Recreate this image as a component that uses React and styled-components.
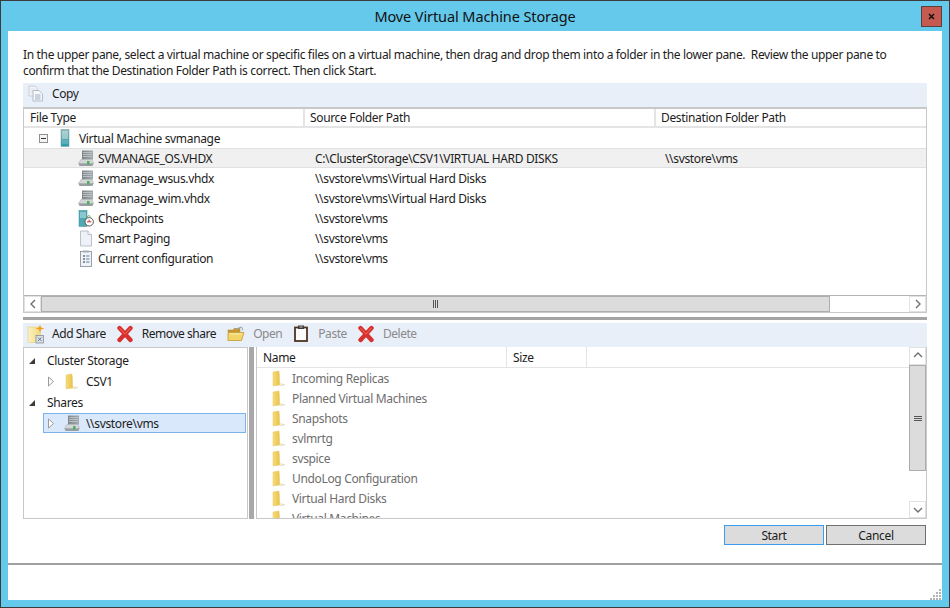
import React from 'react'
import styled, { createGlobalStyle } from 'styled-components'

const Global = createGlobalStyle`
html,body{margin:0;padding:0;background:#fff;}
body{font-family:"Noto Sans","Open Sans",sans-serif;font-size:12px;color:#1c1c1c;letter-spacing:-.34px;}
`
const Frame = styled.div`
position:relative;
width:950px;
height:608px;
box-sizing:border-box;
border:1px solid #3c3c3c;
background:#65c9eb;
display:flex;
flex-direction:column;
padding:0 7px 7px 7px;
overflow:hidden;
`
const TitleBar = styled.div`
height:30px;
flex:none;
display:grid;
grid-template-columns:1fr auto 1fr;
align-items:center;
`
const Title = styled.div`
grid-column:2;
font-size:14.5px;
letter-spacing:-.1px;
color:#111;
`
const CloseBtn = styled.div`
justify-self:end;
width:21px;
height:21px;
box-sizing:border-box;
background:#c55a50;
border:1px solid #5b3f3c;
display:flex;
align-items:center;
justify-content:center;
`
const Body = styled.div`
flex:1;
background:#fff;
display:flex;
flex-direction:column;
min-height:0;
`
const Main = styled.div`
padding:16px 15px 0 15px;
height:532px;
box-sizing:border-box;
display:flex;
flex-direction:column;
flex:none;
`
const Intro = styled.p`
margin:0 0 4px;
line-height:16px;
white-space:pre;
`
const Toolbar = styled.div`
height:24px;
flex:none;
box-sizing:border-box;
padding-bottom:${p => p.$lift}px;
background:#e8eff9;
display:flex;
align-items:center;
`
const Tool = styled.div`
display:flex;
align-items:center;
gap:${p => p.$gap || 8}px;
margin-left:${p => p.$left}px;
color:${p => p.$off ? '#8a8a8a' : '#1c1c1c'};
letter-spacing:-.45px;
white-space:nowrap;
`
const Upper = styled.div`
height:206px;
flex:none;
box-sizing:border-box;
border:1px solid #c8c8c8;
border-top-width:2px;
display:flex;
flex-direction:column;
`
const TableHead = styled.div`
height:17px;
flex:none;
display:flex;
border-bottom:2px solid #e4e4e4;
box-sizing:content-box;
`
const HeadCell = styled.div`
width:${p => p.$w}px;
flex:${p => p.$w ? 'none' : 1};
box-sizing:border-box;
padding-left:${p => p.$pad || 6}px;
line-height:17px;
border-right:${p => p.$line ? '2px solid #e4e4e4' : 'none'};
`
const TableBody = styled.div`
flex:1;
min-height:0;
`
const Row = styled.div`
height:20px;
box-sizing:border-box;
display:flex;
align-items:center;
background:${p => p.$sel ? '#f0f0f0' : 'transparent'};
${p => p.$sel && 'border-top:1px solid #e0e0e0;border-bottom:1px solid #e0e0e0;'}
`
const NameCell = styled.div`
width:291px;
flex:none;
display:flex;
align-items:center;
gap:4px;
padding-left:${p => p.$indent}px;
box-sizing:border-box;
white-space:nowrap;
`
const PathCell = styled.div`
width:${p => p.$w}px;
flex:none;
white-space:nowrap;
`
const VmLabel = styled.span`
margin-left:5px;
`
const ExpandBox = styled.div`
width:9px;
height:9px;
box-sizing:border-box;
border:1px solid #8f8f8f;
background:#f4f4f4;
margin-right:8px;
display:flex;
align-items:center;
justify-content:center;
&::before{content:"";width:5px;height:1px;background:#333;}
`
const HScroll = styled.div`
height:16px;
flex:none;
display:flex;
border-top:1px solid #b4b4b4;
`
const ArrowBtn = styled.div`
width:${p => p.$size || 17}px;
height:${p => p.$h || 16}px;
flex:none;
box-sizing:border-box;
display:flex;
align-items:center;
justify-content:center;
background:#fff;
border:1px solid #e2e2e2;
`
const HThumb = styled.div`
width:789px;
flex:none;
background:#dcdcdc;
box-sizing:border-box;
border:1px solid #adadad;
display:flex;
align-items:center;
justify-content:center;
`
const Grip = styled.div`
display:flex;
flex-direction:${p => p.$v ? 'column' : 'row'};
gap:1px;
& span{
  display:block;
  background:#555;
  width:${p => p.$v ? '8px' : '1px'};
  height:${p => p.$v ? '1px' : '8px'};
}
`
const Track = styled.div`
flex:1;
background:#fff;
`
const Splitter = styled.div`
height:3px;
flex:none;
margin:4px 0 3px;
background:#a4a4a4;
`
const Lower = styled.div`
height:172px;
flex:none;
display:flex;
`
const TreePane = styled.div`
width:225px;
flex:none;
box-sizing:border-box;
border:1px solid #c8c8c8;
padding-top:2px;
`
const TreeRow = styled.div`
height:21px;
display:flex;
align-items:center;
box-sizing:border-box;
margin-left:${p => p.$left || 0}px;
margin-right:${p => p.$left ? 1 : 0}px;
white-space:nowrap;
${p => p.$sel && 'height:20px;background:#d9e8fa;border:1px solid #7db3e8;'}
`
const TreeMark = styled.span`
display:flex;
margin-left:${p => p.$left}px;
margin-right:${p => p.$right}px;
`
const TreeLabel = styled.span`
margin-left:${p => p.$left}px;
`
const VSplit = styled.div`
width:5px;
flex:none;
margin-left:1px;
margin-right:2px;
background:#a8a8a8;
`
const ListPane = styled.div`
flex:1;
min-width:0;
box-sizing:border-box;
border:1px solid #c8c8c8;
border-top:none;
display:flex;
`
const ListMain = styled.div`
flex:1;
min-width:0;
overflow:hidden;
display:flex;
flex-direction:column;
`
const ListHead = styled.div`
height:21px;
flex:none;
display:flex;
box-sizing:border-box;
border-bottom:1px solid #e4e4e4;
`
const ListHeadCell = styled.div`
width:${p => p.$w}px;
flex:none;
box-sizing:border-box;
padding-left:6px;
line-height:22px;
border-right:1px solid #e4e4e4;
`
const ListRow = styled.div`
height:20px;
flex:none;
display:flex;
align-items:center;
gap:6px;
padding-left:15px;
color:#6e6e6e;
white-space:nowrap;
`
const VScroll = styled.div`
width:17px;
flex:none;
display:flex;
flex-direction:column;
`
const VThumb = styled.div`
height:106px;
flex:none;
background:#dcdcdc;
box-sizing:border-box;
border:1px solid #adadad;
display:flex;
align-items:center;
justify-content:center;
`
const Buttons = styled.div`
display:flex;
justify-content:flex-end;
gap:2px;
margin-top:6px;
padding-right:1px;
`
const Btn = styled.div`
width:100px;
height:20px;
box-sizing:border-box;
background:#dcdcdc;
border:1px solid ${p => p.$primary ? '#3c9cf0' : '#707070'};
text-align:center;
line-height:19px;
`
const Footer = styled.div`
flex:1;
border-top:2px solid #a0a0a0;
`
const GripCorner = styled.svg`
position:absolute;
right:7px;
bottom:7px;
`

const Folder = () => (
  <svg width="14" height="17" viewBox="0 0 14 17">
    <defs>
      <linearGradient id="fold" x1="0" y1="0" x2="1" y2="0">
        <stop offset="0" stopColor="#f6dc78" />
        <stop offset="1" stopColor="#e9c24e" />
      </linearGradient>
    </defs>
    <path d="M11 14 L13.5 15 L7 16 Z" fill="#c9c9c9" />
    <path d="M7 3 L8 4 L8 13 L11 13.5 L11 15 L7 15.5 Z" fill="#f7ecc0" />
    <path d="M1 2 L7 1 L7.5 15 L1 16 Z" fill="url(#fold)" stroke="#e6c766" strokeWidth=".5" />
  </svg>
)
const Disk = () => (
  <svg width="16" height="17" viewBox="0 0 16 17">
    <defs>
      <linearGradient id="dsk" x1="0" y1="0" x2="1" y2="0">
        <stop offset="0" stopColor="#7f868a" />
        <stop offset="1" stopColor="#a4aaad" />
      </linearGradient>
    </defs>
    <path d="M4 0.5 H15 V9.5 H4 Z" fill="url(#dsk)" />
    <path d="M5 2.5h9M5 4.5h9M5 6.5h9" stroke="#c7cccf" strokeWidth=".8" />
    <path d="M3 9.5 L14 9.5 L15.5 13.5 L0.5 13.5 Z" fill="#d3d7d9" stroke="#a0a5a7" strokeWidth=".5" />
    <path d="M0.5 13.5 H15.5 L14.5 16 H1.5 Z" fill="#989ea1" />
    <rect x="9" y="11" width="2.5" height="3.5" fill="#4fae5b" />
  </svg>
)
const Server = () => (
  <svg width="10" height="18" viewBox="0 0 10 18">
    <defs>
      <linearGradient id="srv" x1="0" y1="0" x2="0" y2="1">
        <stop offset="0" stopColor="#8db7bc" />
        <stop offset="1" stopColor="#2c9aa6" />
      </linearGradient>
    </defs>
    <rect x="1" y="0.5" width="8" height="17" fill="url(#srv)" stroke="#6d9da3" strokeWidth=".5" />
    <path d="M2 3h6M2 5h6M2 7h6M2 9h6" stroke="#dff1f3" strokeWidth=".9" />
    <path d="M2 12h6M2 14h6" stroke="#6fc4cc" strokeWidth=".9" />
  </svg>
)
const Checkpoint = () => (
  <svg width="16" height="17" viewBox="0 0 16 17">
    <rect x="1" y="0.5" width="8" height="16" fill="#4fa8b2" stroke="#3c8e98" strokeWidth=".5" />
    <path d="M2 3h6M2 5h6M2 7h6" stroke="#d3eef0" strokeWidth=".9" />
    <circle cx="11.2" cy="11.8" r="4.2" fill="#fff" stroke="#4a4a4a" strokeWidth=".9" />
    <path d="M9 11.8h4.4M11.2 9.6v2.2" stroke="#c33" strokeWidth="1" />
    <path d="M8.5 8 L10.5 5.5 L12.5 6.5" stroke="#5a9e4a" strokeWidth=".9" fill="none" />
  </svg>
)
const Page = () => (
  <svg width="16" height="17" viewBox="0 0 16 17">
    <path d="M2.5 1 H10 L13.5 4.5 V16 H2.5 Z" fill="#eef1f8" stroke="#adb3be" strokeWidth=".8" />
    <path d="M10 1 V4.5 H13.5" fill="#fff" stroke="#adb3be" strokeWidth=".8" />
  </svg>
)
const Config = () => (
  <svg width="16" height="17" viewBox="0 0 16 17">
    <rect x="2.5" y="1.5" width="11" height="15" fill="#eff2f6" stroke="#8e96a3" strokeWidth=".9" />
    <rect x="5" y="0.5" width="6" height="2" fill="#a6adb7" />
    <path d="M5 6h2M5 9h2M5 12h2" stroke="#2f2f2f" strokeWidth="1.1" />
    <path d="M8 6h3.5M8 9h3.5M8 12h3.5" stroke="#5c7fb0" strokeWidth="1" />
  </svg>
)
const CopyIcon = () => (
  <svg width="16" height="17" viewBox="0 0 16 17">
    <path d="M1 1 H7 L9 3 V11 H1 Z" fill="#f3f4f7" stroke="#c3c5cb" strokeWidth=".8" />
    <path d="M2.5 4h4M2.5 6h4M2.5 8h4" stroke="#d4d6db" strokeWidth=".7" />
    <path d="M5 5.5 H11 L14.5 9 V16 H5 Z" fill="#f6f8fc" stroke="#a8aeb8" strokeWidth=".8" />
    <path d="M7 10h5.5M7 12h5.5M7 14h5.5" stroke="#8fa7c8" strokeWidth=".9" />
  </svg>
)
const AddShareIcon = () => (
  <svg width="18" height="20" viewBox="0 0 18 20">
    <defs>
      <linearGradient id="shr" x1="0" y1="0" x2="1" y2="0">
        <stop offset="0" stopColor="#fbf1c4" />
        <stop offset="1" stopColor="#f2d982" />
      </linearGradient>
    </defs>
    <rect x="1" y="3" width="12.5" height="15.5" fill="url(#shr)" stroke="#e3ce85" strokeWidth=".6" />
    <path d="M13 0.5 L14 3.5 L17.5 4.5 L14 5.5 L13 8.5 L12 5.5 L8.5 4.5 L12 3.5 Z" fill="#f39c1f" />
    <rect x="9" y="11.5" width="7.5" height="7.5" fill="#d9dee2" stroke="#7b878d" strokeWidth=".7" />
    <path d="M11 13.5l3.5 3.5M14.5 13.5l-3.5 3.5" stroke="#567888" strokeWidth=".9" />
  </svg>
)
const RedX = () => (
  <svg width="18" height="18" viewBox="0 0 18 18">
    <path d="M3.5 3 L14.5 15 M14.5 3 L3.5 15" stroke="#d8302c" strokeWidth="4.4" strokeLinecap="round" />
    <path d="M3.8 3.4 L9 9 M14.2 3.4 L9 9" stroke="#ea5c52" strokeWidth="1.1" strokeLinecap="round" />
  </svg>
)
const OpenFolder = () => (
  <svg width="18" height="16" viewBox="0 0 18 16">
    <path d="M1 4 H6 L7 2.5 H13 V6 H1 Z" fill="#c99a32" stroke="#a8802a" strokeWidth=".5" />
    <path d="M9 3 L14.5 1 L16 4.5" stroke="#8da6b8" strokeWidth="1" fill="none" />
    <path d="M1 6.5 H17 L14.5 14.5 H1 Z" fill="#f3d466" stroke="#c19a36" strokeWidth=".8" />
    <path d="M2.5 8 H15" stroke="#fbeeb0" strokeWidth="1" />
  </svg>
)
const Clipboard = () => (
  <svg width="14" height="17" viewBox="0 0 14 17">
    <rect x="1" y="2.5" width="12" height="13.5" fill="#fbfbfb" stroke="#4e3320" strokeWidth="1.8" />
    <rect x="4" y="0.5" width="6" height="3.5" fill="#3e3a36" />
    <rect x="5.5" y="1.5" width="3" height="1" fill="#cfcfcf" />
  </svg>
)
const Chev = ({ dir }) => {
  const d = { left: 'M6 1 L2 5 L6 9', right: 'M2 1 L6 5 L2 9', up: 'M1 6 L5 2 L9 6', down: 'M1 3 L5 7 L9 3' }[dir]
  return (
    <svg width="10" height="10" viewBox={dir === 'left' || dir === 'right' ? '-1 0 10 10' : '0 0 10 10'}>
      <path d={d} fill="none" stroke="#707070" strokeWidth="1.4" />
    </svg>
  )
}
const TriOpen = () => (
  <svg width="8" height="8" viewBox="0 0 8 8"><path d="M1 7 H7 V1 Z" fill="#3c3c3c" /></svg>
)
const TriClosed = () => (
  <svg width="8" height="11" viewBox="0 0 8 11"><path d="M1.5 1 L6.5 5.5 L1.5 10 Z" fill="#fff" stroke="#9a9a9a" /></svg>
)

const files = [
  { name: 'SVMANAGE_OS.VHDX', src: 'C:\\ClusterStorage\\CSV1\\VIRTUAL HARD DISKS', dest: '\\\\svstore\\vms', icon: <Disk />, sel: true },
  { name: 'svmanage_wsus.vhdx', src: '\\\\svstore\\vms\\Virtual Hard Disks', icon: <Disk /> },
  { name: 'svmanage_wim.vhdx', src: '\\\\svstore\\vms\\Virtual Hard Disks', icon: <Disk /> },
  { name: 'Checkpoints', src: '\\\\svstore\\vms', icon: <Checkpoint /> },
  { name: 'Smart Paging', src: '\\\\svstore\\vms', icon: <Page /> },
  { name: 'Current configuration', src: '\\\\svstore\\vms', icon: <Config /> },
]
const folders = ['Incoming Replicas', 'Planned Virtual Machines', 'Snapshots', 'svlmrtg', 'svspice', 'UndoLog Configuration', 'Virtual Hard Disks', 'Virtual Machines']

export default function App() {
  return (
    <>
      <Global />
      <Frame>
        <TitleBar>
          <Title>Move Virtual Machine Storage</Title>
          <CloseBtn>
            <svg width="9" height="9" viewBox="0 0 9 9"><path d="M2 2 L7 7 M7 2 L2 7" stroke="#111" strokeWidth="1.5" /></svg>
          </CloseBtn>
        </TitleBar>
        <Body>
          <Main>
            <Intro>{'In the upper pane, select a virtual machine or specific files on a virtual machine, then drag and drop them into a folder in the lower pane.  Review the upper pane to\nconfirm that the Destination Folder Path is correct. Then click Start.'}</Intro>
            <Toolbar $lift={4}>
              <Tool $left={5} $gap={8}><CopyIcon />Copy</Tool>
            </Toolbar>
            <Upper>
              <TableHead>
                <HeadCell $w={281} $line>File Type</HeadCell>
                <HeadCell $w={351} $line $pad={5}>Source Folder Path</HeadCell>
                <HeadCell $pad={5}>Destination Folder Path</HeadCell>
              </TableHead>
              <TableBody>
                <Row>
                  <NameCell $indent={15}>
                    <ExpandBox /><Server />
                    <VmLabel>Virtual Machine svmanage</VmLabel>
                  </NameCell>
                </Row>
                {files.map(f => (
                  <Row key={f.name} $sel={f.sel}>
                    <NameCell $indent={54}>{f.icon}{f.name}</NameCell>
                    <PathCell $w={350}>{f.src}</PathCell>
                    <PathCell>{f.dest}</PathCell>
                  </Row>
                ))}
              </TableBody>
              <HScroll>
                <ArrowBtn><Chev dir="left" /></ArrowBtn>
                <HThumb><Grip>{[0, 1, 2].map(i => <span key={i} />)}</Grip></HThumb>
                <Track />
                <ArrowBtn><Chev dir="right" /></ArrowBtn>
              </HScroll>
            </Upper>
            <Splitter />
            <Toolbar $lift={3}>
              <Tool $left={4} $gap={7}><AddShareIcon />Add Share</Tool>
              <Tool $left={10}><RedX />Remove share</Tool>
              <Tool $left={11} $off><OpenFolder />Open</Tool>
              <Tool $left={12} $off $gap={10}><Clipboard />Paste</Tool>
              <Tool $left={10} $off><RedX />Delete</Tool>
            </Toolbar>
            <Lower>
              <TreePane>
                <TreeRow>
                  <TreeMark $left={4} $right={11}><TriOpen /></TreeMark>Cluster Storage
                </TreeRow>
                <TreeRow>
                  <TreeMark $left={23} $right={10}><TriClosed /></TreeMark>
                  <Folder /><TreeLabel $left={7}>CSV1</TreeLabel>
                </TreeRow>
                <TreeRow>
                  <TreeMark $left={4} $right={11}><TriOpen /></TreeMark>Shares
                </TreeRow>
                <TreeRow $left={19} $sel>
                  <TreeMark $left={3} $right={9}><TriClosed /></TreeMark>
                  <Disk /><TreeLabel $left={6}>\\svstore\vms</TreeLabel>
                </TreeRow>
              </TreePane>
              <VSplit />
              <ListPane>
                <ListMain>
                  <ListHead>
                    <ListHeadCell $w={250}>Name</ListHeadCell>
                    <ListHeadCell $w={80}>Size</ListHeadCell>
                  </ListHead>
                  {folders.map(n => (
                    <ListRow key={n}><Folder />{n}</ListRow>
                  ))}
                </ListMain>
                <VScroll>
                  <ArrowBtn $h={18}><Chev dir="up" /></ArrowBtn>
                  <VThumb><Grip $v>{[0, 1, 2].map(i => <span key={i} />)}</Grip></VThumb>
                  <Track />
                  <ArrowBtn $h={17}><Chev dir="down" /></ArrowBtn>
                </VScroll>
              </ListPane>
            </Lower>
            <Buttons>
              <Btn $primary>Start</Btn>
              <Btn>Cancel</Btn>
            </Buttons>
          </Main>
          <Footer />
        </Body>
        <GripCorner width="12" height="12" viewBox="0 0 12 12">
          {[[9, 1], [6, 4], [9, 4], [3, 7], [6, 7], [9, 7], [0, 10], [3, 10], [6, 10], [9, 10]].map(([x, y]) => (
            <rect key={x + '-' + y} x={x} y={y} width="2" height="2" fill="#b4b4b4" />
          ))}
        </GripCorner>
      </Frame>
    </>
  )
}
